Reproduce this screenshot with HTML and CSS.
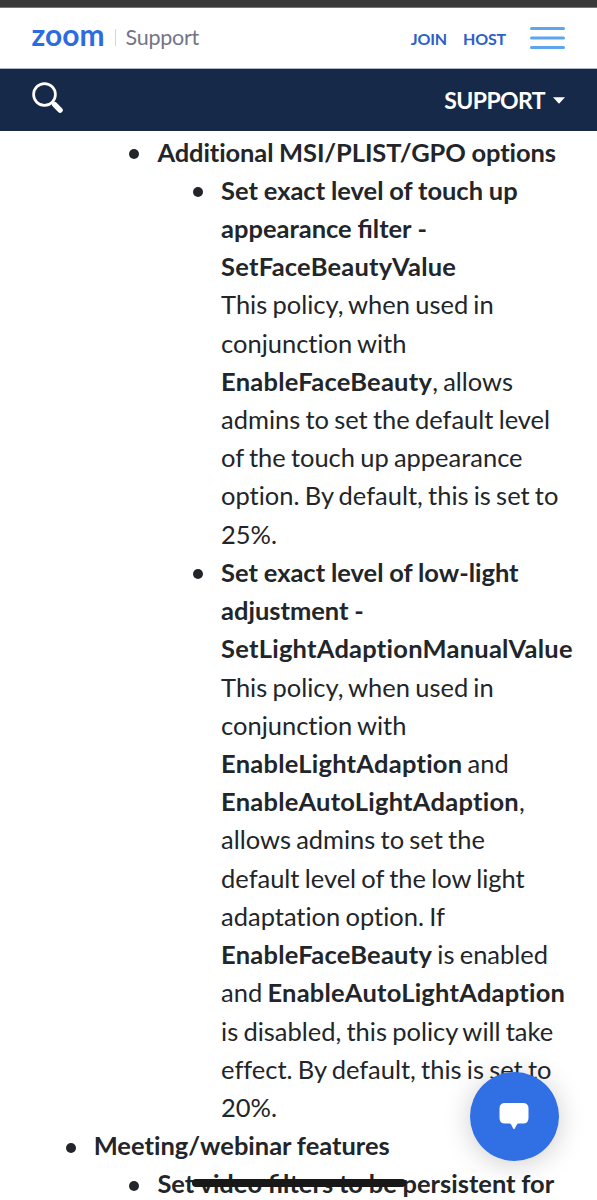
FILE: index.html
```html
<!DOCTYPE html>
<html lang="en">
<head>
<meta charset="utf-8">
<title>Zoom Support</title>
<link rel="stylesheet" href="styles.css">
</head>
<body>
<div class="screen">
  <div class="status-strip"></div>
  <header class="topbar">
    <a class="brand">
      <svg class="wordmark" width="76" height="44" viewBox="0 0 76 44" role="img" aria-label="zoom"><text class="wordmark-text" x="-.5" y="30" textLength="73" lengthAdjust="spacingAndGlyphs">zoom</text></svg>
      <span class="brand-rule"></span>
      <span class="brand-section">Support</span>
    </a>
    <nav class="account">
      <a>JOIN</a>
      <a>HOST</a>
      <svg class="menu" width="35" height="24" viewBox="0 0 35 24"><path d="M1.5 2.5h32M1.5 12h32M1.5 21.5h32" stroke="#5da6ef" stroke-width="3" stroke-linecap="round"/></svg>
    </nav>
  </header>
  <div class="navbar">
    <svg class="search" width="32" height="32" viewBox="0 0 32 32" fill="none" stroke="#fff" stroke-linecap="round"><circle cx="12.5" cy="12.5" r="10.9" stroke-width="2.7"/><path d="M20.5 20.5l2 2" stroke-width="3"/><path d="M22.7 22.7l5.4 5.4" stroke-width="5.4"/></svg>
    <a class="nav-menu">SUPPORT <svg width="12" height="7" viewBox="0 0 12 7"><path d="M0 .3h12L6 6.8z" fill="#fff"/></svg></a>
  </div>
  <main class="article">
    <ul>
      <li class="continued">
        <ul>
          <li><b class="caps">Additional MSI/PLIST/GPO options</b>
            <ul>
              <li><b>Set exact level of touch up appearance <span class="lig">filter</span> - <span class="term">SetFaceBeautyValue</span></b><br>This policy, when used in conjunction with <b class="term">EnableFaceBeauty</b>, allows admins to set the default level of the touch up appearance option. By default, this is set to 25%.</li>
              <li><b>Set exact level of low-light adjustment - <span class="term">SetLightAdaptionManualValue</span></b><br>This policy, when used in conjunction with <b class="term">EnableLightAdaption</b> and <b class="term">EnableAutoLightAdaption</b>, allows admins to set the<br>default level of the low light<br>adaptation option. If<br><b class="term">EnableFaceBeauty</b> is enabled and <b class="term">EnableAutoLightAdaption</b> is disabled, this policy will take effect. By default, this is set to 20%.</li>
            </ul>
          </li>
        </ul>
      </li>
      <li><b>Meeting/webinar features</b>
        <ul>
          <li><b>Set video <span class="lig">filters</span> to be persistent for</b></li>
        </ul>
      </li>
    </ul>
  </main>
  <div class="chat">
    <svg width="30" height="27" viewBox="0 0 30 27"><path d="M6 0h18q5.500 0 5.500 5.500v9.500q0 5.500-5.500 5.500h-4.500q-1 0-1.600 1l-2.100 4q-.8 1.200-1.600 0l-2.100-4q-.6-1-1.600-1H6q-5.500 0-5.500-5.500V5.500Q.5 0 6 0z" fill="#fff"/></svg>
  </div>
  <div class="home-indicator"></div>
</div>
</body>
</html>
```
FILE: styles.css
```css
* { box-sizing: border-box; }
body {
  margin: 0;
  background: #fff;
  color: #222529;
  font-family: Lato, sans-serif;
}
.screen {
  position: relative;
  width: 597px;
  height: 1200px;
  overflow: hidden;
}
.status-strip {
  height: 8px;
  background: #393939;
  border-bottom: 1px solid #777;
}
.topbar {
  display: flex;
  justify-content: space-between;
  align-items: center;
  height: 61px;
  padding: 0 32px;
  border-bottom: 1px solid #aeb6c5;
}
.brand { display: flex; align-items: center; }
.wordmark { overflow: visible; }
.wordmark-text {
  font: 700 30px Lato, sans-serif;
  fill: #2d6be0;
}
.brand-rule {
  width: 1px;
  height: 17px;
  margin: 0 9.500px 2px 7px;
  background: #d4d4dc;
}
.brand-section {
  margin-bottom: 2px;
  color: #747487;
  font-size: 21.5px;
  letter-spacing: -.25px;
}
.account {
  display: flex;
  align-items: center;
  gap: 16px;
  color: #2a61c8;
  font-size: 16px;
  font-weight: 700;
  letter-spacing: -.15px;
}
.menu { margin-left: 8px; }
.navbar {
  display: flex;
  justify-content: space-between;
  align-items: center;
  height: 62px;
  padding: 0 32px;
  background: #162948;
}
.search { margin-bottom: 5px; }
.nav-menu {
  display: flex;
  align-items: center;
  gap: 8px;
  color: #fff;
  font-size: 23px;
  font-weight: 700;
  letter-spacing: -.6px;
}
.article {
  padding: 1.5px 25px 0 30px;
  font-size: 25.48px;
  line-height: 38.22px;
  font-variant-ligatures: none;
  word-spacing: -1.3px;
}
.article b { word-spacing: -.4px; }
.article .caps { letter-spacing: -.1px; }
.lig { font-variant-ligatures: normal; }
.term { letter-spacing: .25px; }
.article ul {
  margin: 0;
  padding-left: 63.7px;
  list-style: none;
}
.article li { position: relative; }
.article li::before {
  content: "";
  position: absolute;
  left: -28px;
  top: 16.500px;
  width: 10px;
  height: 10px;
  border-radius: 50%;
  background: #222529;
}
.article .continued::before { display: none; }
.chat {
  position: absolute;
  left: 469.5px;
  top: 1072px;
  display: flex;
  justify-content: center;
  align-items: center;
  width: 89px;
  height: 89px;
  border-radius: 50%;
  background: #316fe4;
  box-shadow: 0 3px 28px rgba(0, 0, 0, .2);
}
.home-indicator {
  position: absolute;
  left: 192px;
  top: 1179px;
  width: 214px;
  height: 8px;
  border-radius: 4px;
  background: #181818;
}
```
